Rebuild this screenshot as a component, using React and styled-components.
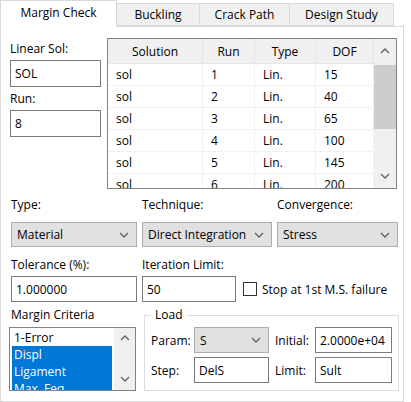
import React from 'react';
import styled, { createGlobalStyle } from 'styled-components';

const Global = createGlobalStyle`
  html, body { margin: 0; padding: 0; background: #fff; }
  body { font-family: "Open Sans", "Noto Sans", sans-serif; font-size: 12px; color: #000; }
  * { box-sizing: border-box; }
`;

const Window = styled.div`
  width: 411px; height: 402px; overflow: hidden; background: #fff;
  display: flex; flex-direction: column;
`;

const TabBar = styled.div`
  display: flex; align-items: flex-end; height: 26px;
`;

const Tab = styled.div`
  width: ${p => p.$w}px;
  height: ${p => (p.$active ? 27 : 23)}px;
  margin-bottom: ${p => (p.$active ? -1 : 0)}px;
  background: ${p => (p.$active ? '#fff' : '#f0f0f0')};
  border: 1px solid #d9d9d9;
  border-bottom: ${p => (p.$active ? 'none' : '1px solid #d9d9d9')};
  border-left: ${p => (p.$first || p.$active ? '1px solid #d9d9d9' : 'none')};
  display: flex; align-items: center; justify-content: center;
  padding-bottom: ${p => (p.$active ? 4 : 1)}px;
  position: relative; z-index: ${p => (p.$active ? 2 : 1)};
  white-space: nowrap;
`;

const Panel = styled.div`
  flex: 1; margin-right: 7px;
  border: 1px solid #d9d9d9;
  padding: 11px 0 0 9px;
  background: #fff;
`;

const TopSection = styled.div`
  display: flex; gap: 6px;
`;

const LeftCol = styled.div`
  width: 91px; display: flex; flex-direction: column; padding-top: 3px;
`;

const Label = styled.div`
  line-height: 16px; height: 16px; white-space: nowrap;
  margin-top: ${p => p.$mt || 0}px;
`;

const TextBox = styled.div`
  height: ${p => p.$h || 26}px;
  width: ${p => (p.$w ? p.$w + 'px' : '100%')};
  border: 1px solid #7a7a7a; background: #fff;
  padding-left: 4px; display: flex; align-items: center;
  margin-top: ${p => p.$mt || 0}px;
  white-space: nowrap; overflow: hidden;
`;

const Table = styled.div`
  width: 290px; height: 151px; border: 1px solid #828282;
  display: flex; overflow: hidden;
`;

const TableBody = styled.div`
  width: 266px; display: flex; flex-direction: column; overflow: hidden;
`;

const RowGrid = styled.div`
  display: grid; grid-template-columns: 95px 52px 61px 58px;
  height: ${p => (p.$header ? 25 : 22)}px; flex-shrink: 0;
  background: ${p => (p.$header ? '#f0f0f0' : '#fff')};
  border-bottom: 1px solid ${p => (p.$header ? '#e5e5e5' : '#f0f0f0')};
`;

const Cell = styled.div`
  display: flex; align-items: center;
  justify-content: ${p => (p.$header ? 'center' : 'flex-start')};
  padding-left: ${p => (p.$header ? 0 : 8)}px;
  border-right: 1px solid ${p => (p.$header ? '#e5e5e5' : '#f0f0f0')};
  white-space: nowrap;
`;

const ScrollBar = styled.div`
  width: ${p => p.$w}px; flex-shrink: 0; background: #f0f0f0;
  display: flex; flex-direction: column; align-items: center;
`;

const ScrollBtn = styled.div`
  height: ${p => p.$h || 22}px; width: 100%;
  display: flex; align-items: center; justify-content: center;
`;

const Thumb = styled.div`
  width: 100%; height: ${p => p.$h}px; background: #cdcdcd; margin-top: 3px;
`;

const Spacer = styled.div`flex: 1;`;

const Grid = styled.div`
  display: grid; grid-template-columns: 126px 130px 121px;
  column-gap: 5px; margin-top: 8px; margin-left: 1px;
`;

const Field = styled.div`
  display: flex; flex-direction: column;
  grid-column: ${p => p.$span || 'auto'};
  margin-top: ${p => p.$mt || 0}px;
`;

const Combo = styled.div`
  height: ${p => p.$h || 25}px; width: ${p => (p.$w ? p.$w + 'px' : '100%')};
  background: #e1e1e1; border: 1px solid #adadad;
  display: flex; align-items: center; justify-content: space-between;
  padding: 0 7px 0 5px; margin-top: ${p => p.$mt || 0}px; white-space: nowrap;
`;

const Row = styled.div`
  display: flex; align-items: center; gap: ${p => p.$gap || 0}px;
  margin-top: ${p => p.$mt || 0}px;
`;

const CheckBox = styled.div`
  width: 14px; height: 14px; border: 1px solid #333; background: #fff; flex-shrink: 0;
`;

const CheckLabel = styled.div`
  display: flex; align-items: center; gap: 5px; white-space: nowrap;
`;

const ListBox = styled.div`
  width: 127px; height: 64px; border: 1px solid #828282; margin-top: 4px;
  margin-left: -2px; display: flex; overflow: hidden; background: #fff;
`;

const ListItems = styled.div`
  flex: 1; padding: 1px 2px 0 2px; overflow: hidden;
`;

const ListItem = styled.div`
  height: 17px; line-height: 17px; padding-left: 2px;
  background: ${p => (p.$sel ? '#0078d7' : 'transparent')};
  color: ${p => (p.$sel ? '#fff' : '#000')};
  white-space: nowrap;
`;

const Group = styled.fieldset`
  grid-column: 2 / 4; margin: 0 -1px 0 2px; padding: 4px 5px 6px 6px;
  border: 1px solid #dcdcdc; min-width: 0;
`;

const Legend = styled.legend`
  padding: 0 4px; line-height: 16px; font-size: 12px;
`;

const LoadGrid = styled.div`
  display: grid; grid-template-columns: 43px 75px 46px 77px;
  grid-auto-rows: 26px; row-gap: 4px; align-items: center;
`;

const LoadLabel = styled.div`
  padding-left: ${p => (p.$indent ? 6 : 0)}px; white-space: nowrap;
`;

const Chevron = ({ up, color = '#606060' }) => (
  <svg width="10" height="6" viewBox="0 0 10 6">
    <path d={up ? 'M1 5 L5 1 L9 5' : 'M1 1 L5 5 L9 1'} fill="none" stroke={color} strokeWidth="1.3" />
  </svg>
);

const rows = [
  ['sol', '1', 'Lin.', '15'],
  ['sol', '2', 'Lin.', '40'],
  ['sol', '3', 'Lin.', '65'],
  ['sol', '4', 'Lin.', '100'],
  ['sol', '5', 'Lin.', '145'],
  ['sol', '6', 'Lin.', '200'],
];

const tabs = [
  { name: 'Margin Check', w: 117, active: true },
  { name: 'Buckling', w: 83 },
  { name: 'Crack Path', w: 90 },
  { name: 'Design Study', w: 104 },
];

export default function App() {
  return (
    <>
      <Global />
      <Window>
        <TabBar>
          {tabs.map((t, i) => (
            <Tab key={t.name} $w={t.w} $active={t.active} $first={i === 0}>{t.name}</Tab>
          ))}
        </TabBar>
        <Panel>
          <TopSection>
            <LeftCol>
              <Label>Linear Sol:</Label>
              <TextBox $h={27} $mt={3}>SOL</TextBox>
              <Label $mt={4}>Run:</Label>
              <TextBox $h={27} $mt={3}>8</TextBox>
            </LeftCol>
            <Table>
              <TableBody>
                <RowGrid $header>
                  {['Solution', 'Run', 'Type', 'DOF'].map(h => <Cell key={h} $header>{h}</Cell>)}
                </RowGrid>
                {rows.map((r, i) => (
                  <RowGrid key={i}>
                    {r.map((c, j) => <Cell key={j}>{c}</Cell>)}
                  </RowGrid>
                ))}
              </TableBody>
              <ScrollBar $w={22}>
                <ScrollBtn $h={23}><Chevron up /></ScrollBtn>
                <Thumb $h={64} />
                <Spacer />
                <ScrollBtn $h={24}><Chevron /></ScrollBtn>
              </ScrollBar>
            </Table>
          </TopSection>

          <Grid>
            <Field>
              <Label>Type:</Label>
              <Combo $mt={9}>Material<Chevron /></Combo>
            </Field>
            <Field>
              <Label>Technique:</Label>
              <Combo $mt={9}>Direct Integration<Chevron /></Combo>
            </Field>
            <Field>
              <Label>Convergence:</Label>
              <Combo $mt={9}>Stress<Chevron /></Combo>
            </Field>

            <Field $mt={10}>
              <Label>Tolerance (%):</Label>
              <TextBox $mt={3}>1.000000</TextBox>
            </Field>
            <Field $mt={10} $span="2 / 4">
              <Label>Iteration Limit:</Label>
              <Row $mt={3} $gap={7}>
                <TextBox $w={94}>50</TextBox>
                <CheckLabel><CheckBox />Stop at 1st M.S. failure</CheckLabel>
              </Row>
            </Field>

            <Field $mt={5}>
              <Label>Margin Criteria</Label>
              <ListBox>
                <ListItems>
                  <ListItem>1-Error</ListItem>
                  <ListItem $sel>Displ</ListItem>
                  <ListItem $sel>Ligament</ListItem>
                  <ListItem $sel>Max. Feq</ListItem>
                </ListItems>
                <ScrollBar $w={21}>
                  <ScrollBtn $h={20}><Chevron up /></ScrollBtn>
                  <Spacer />
                  <ScrollBtn $h={22}><Chevron /></ScrollBtn>
                </ScrollBar>
              </ListBox>
            </Field>
            <Group style={{ marginTop: 5 }}>
              <Legend>Load</Legend>
              <LoadGrid>
                <LoadLabel>Param:</LoadLabel>
                <Combo $h={26}>S<Chevron /></Combo>
                <LoadLabel $indent>Initial:</LoadLabel>
                <TextBox>2.0000e+04</TextBox>
                <LoadLabel>Step:</LoadLabel>
                <TextBox>DelS</TextBox>
                <LoadLabel $indent>Limit:</LoadLabel>
                <TextBox>Sult</TextBox>
              </LoadGrid>
            </Group>
          </Grid>
        </Panel>
      </Window>
    </>
  );
}
